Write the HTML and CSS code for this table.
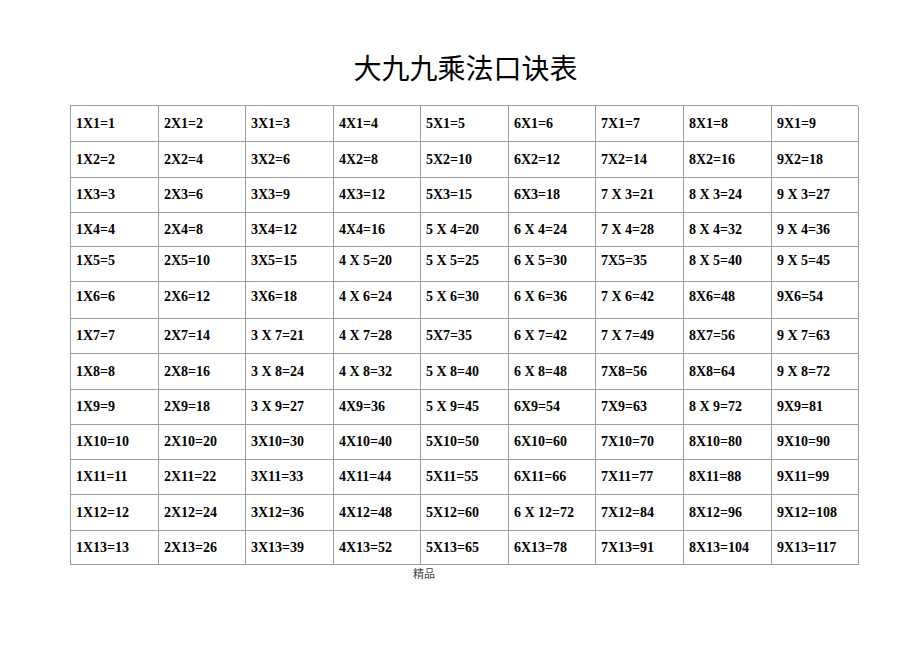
FILE: index.html
```html
<!DOCTYPE html>
<html lang="zh">
<head>
<meta charset="utf-8">
<title>大九九乘法口诀表</title>
<link rel="stylesheet" href="styles.css">
</head>
<body>
<div class="page">
  <h1 class="title">大九九乘法口诀表</h1>
  <div class="grid">
    <div class="row"><div class="c">1X1=1</div><div class="c">2X1=2</div><div class="c">3X1=3</div><div class="c">4X1=4</div><div class="c">5X1=5</div><div class="c">6X1=6</div><div class="c">7X1=7</div><div class="c">8X1=8</div><div class="c">9X1=9</div></div>
    <div class="row"><div class="c">1X2=2</div><div class="c">2X2=4</div><div class="c">3X2=6</div><div class="c">4X2=8</div><div class="c">5X2=10</div><div class="c">6X2=12</div><div class="c">7X2=14</div><div class="c">8X2=16</div><div class="c">9X2=18</div></div>
    <div class="row"><div class="c">1X3=3</div><div class="c">2X3=6</div><div class="c">3X3=9</div><div class="c">4X3=12</div><div class="c">5X3=15</div><div class="c">6X3=18</div><div class="c">7 X 3=21</div><div class="c">8 X 3=24</div><div class="c">9 X 3=27</div></div>
    <div class="row"><div class="c">1X4=4</div><div class="c">2X4=8</div><div class="c">3X4=12</div><div class="c">4X4=16</div><div class="c">5 X 4=20</div><div class="c">6 X 4=24</div><div class="c">7 X 4=28</div><div class="c">8 X 4=32</div><div class="c">9 X 4=36</div></div>
    <div class="row raised"><div class="c">1X5=5</div><div class="c">2X5=10</div><div class="c">3X5=15</div><div class="c">4 X 5=20</div><div class="c">5 X 5=25</div><div class="c">6 X 5=30</div><div class="c">7X5=35</div><div class="c">8 X 5=40</div><div class="c">9 X 5=45</div></div>
    <div class="row raised"><div class="c">1X6=6</div><div class="c">2X6=12</div><div class="c">3X6=18</div><div class="c">4 X 6=24</div><div class="c">5 X 6=30</div><div class="c">6 X 6=36</div><div class="c">7 X 6=42</div><div class="c">8X6=48</div><div class="c">9X6=54</div></div>
    <div class="row"><div class="c">1X7=7</div><div class="c">2X7=14</div><div class="c">3 X 7=21</div><div class="c">4 X 7=28</div><div class="c">5X7=35</div><div class="c">6 X 7=42</div><div class="c">7 X 7=49</div><div class="c">8X7=56</div><div class="c">9 X 7=63</div></div>
    <div class="row"><div class="c">1X8=8</div><div class="c">2X8=16</div><div class="c">3 X 8=24</div><div class="c">4 X 8=32</div><div class="c">5 X 8=40</div><div class="c">6 X 8=48</div><div class="c">7X8=56</div><div class="c">8X8=64</div><div class="c">9 X 8=72</div></div>
    <div class="row"><div class="c">1X9=9</div><div class="c">2X9=18</div><div class="c">3 X 9=27</div><div class="c">4X9=36</div><div class="c">5 X 9=45</div><div class="c">6X9=54</div><div class="c">7X9=63</div><div class="c">8 X 9=72</div><div class="c">9X9=81</div></div>
    <div class="row"><div class="c">1X10=10</div><div class="c">2X10=20</div><div class="c">3X10=30</div><div class="c">4X10=40</div><div class="c">5X10=50</div><div class="c">6X10=60</div><div class="c">7X10=70</div><div class="c">8X10=80</div><div class="c">9X10=90</div></div>
    <div class="row"><div class="c">1X11=11</div><div class="c">2X11=22</div><div class="c">3X11=33</div><div class="c">4X11=44</div><div class="c">5X11=55</div><div class="c">6X11=66</div><div class="c">7X11=77</div><div class="c">8X11=88</div><div class="c">9X11=99</div></div>
    <div class="row"><div class="c">1X12=12</div><div class="c">2X12=24</div><div class="c">3X12=36</div><div class="c">4X12=48</div><div class="c">5X12=60</div><div class="c">6 X 12=72</div><div class="c">7X12=84</div><div class="c">8X12=96</div><div class="c">9X12=108</div></div>
    <div class="row"><div class="c">1X13=13</div><div class="c">2X13=26</div><div class="c">3X13=39</div><div class="c">4X13=52</div><div class="c">5X13=65</div><div class="c">6X13=78</div><div class="c">7X13=91</div><div class="c">8X13=104</div><div class="c">9X13=117</div></div>
  </div>
  <div class="foot">精品</div>
</div>
</body>
</html>
```
FILE: styles.css
```css
html, body {
  margin: 0;
  padding: 0;
  background: #ffffff;
}

.page {
  width: 789px;
  margin-left: 70px;
}

.title {
  margin: 47px 0 18px 0;
  height: 40px;
  line-height: 40px;
  text-align: center;
  font-family: "Noto Sans CJK SC", "Noto Sans", sans-serif;
  font-weight: 400;
  font-size: 28px;
  color: #000;
  padding-left: 2px;
}

.grid {
  display: grid;
  grid-template-columns: 88px 87px 88px 87px 88px 87px 88px 88px 87px;
  grid-template-rows: 36px 36px 35px 34px 35px 37px 35px 36px 35px 35px 35px 36px 34px;
  border-top: 1px solid #98a298;
  border-left: 1px solid #98a298;
  width: 788px;
  box-sizing: border-box;
}

.row {
  display: contents;
}

.c {
  display: flex;
  align-items: center;
  padding-left: 5px;
  border-right: 1px solid #98a298;
  border-bottom: 1px solid #98a298;
  font-family: "Liberation Serif", "Times New Roman", serif;
  font-weight: 700;
  font-size: 14px;
  color: #000;
  white-space: nowrap;
}

.raised .c {
  padding-bottom: 6px;
}

.foot {
  margin-top: 1px;
  margin-left: 343px;
  font-family: "Noto Sans CJK SC", "Noto Sans", sans-serif;
  font-size: 11px;
  line-height: 14px;
  color: #444;
}
```
